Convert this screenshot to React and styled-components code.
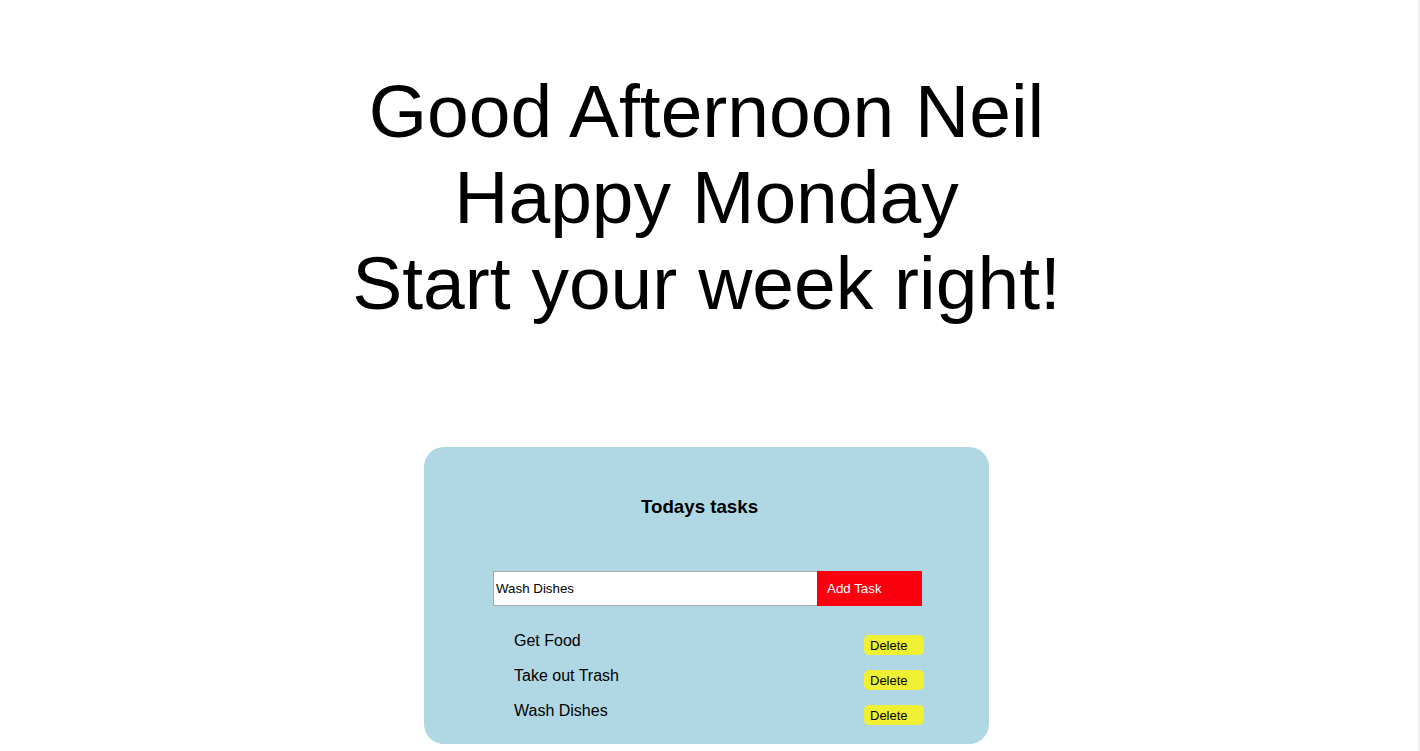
import React, { useState } from "react";
import styled, { createGlobalStyle } from "styled-components";

const GlobalStyle = createGlobalStyle`
  body {
    margin: 0;
    background: #ffffff;
    font-family: "Liberation Sans", Arial, sans-serif;
    color: #000;
  }
`;

const Page = styled.div`
  min-height: 751px;
  padding-right: 5px;
  border-right: 2px solid #f0f0f0;
  box-sizing: border-box;
  overflow: hidden;
`;

const Greeting = styled.h1`
  margin: 68px 0 0;
  text-align: center;
  font-size: 75px;
  font-weight: 400;
  line-height: 86px;
`;

const Card = styled.section`
  width: 565px;
  height: 297px;
  margin: 121px auto 0;
  box-sizing: border-box;
  padding-top: 49px;
  background: #b0d8e4;
  border-radius: 20px;
`;

const Title = styled.h3`
  margin: 0;
  padding-right: 14px;
  text-align: center;
  font-size: 18.72px;
  font-weight: 700;
  line-height: 22px;
`;

const Form = styled.form`
  display: flex;
  margin: 53px 67px 0 69px;
  height: 35px;
`;

const Input = styled.input`
  flex: 1;
  box-sizing: border-box;
  height: 35px;
  margin: 0;
  padding: 0 2px;
  border: 1px solid #a9a9a9;
  border-right: none;
  background: #fff;
  font-family: "Liberation Sans", Arial, sans-serif;
  font-size: 13.33px;
  color: #000;
  outline: none;
`;

const AddButton = styled.button`
  width: 105px;
  height: 35px;
  margin: 0;
  padding: 0 0 0 10px;
  border: none;
  background: #fa000f;
  color: #fff;
  text-align: left;
  font-family: "Liberation Sans", Arial, sans-serif;
  font-size: 13.33px;
  cursor: pointer;
`;

const List = styled.ul`
  list-style: none;
  margin: 26px 0 0;
  padding: 0 65px 0 90px;
`;

const Task = styled.li`
  display: flex;
  justify-content: space-between;
  align-items: flex-start;
  height: 35px;
  font-size: 16px;
  line-height: 18px;
`;

const DeleteButton = styled.button`
  width: 60px;
  height: 20px;
  margin-top: 3px;
  padding: 0 0 0 6px;
  border: none;
  border-radius: 5px;
  background: #f0f032;
  color: #000;
  text-align: left;
  font-family: "Liberation Sans", Arial, sans-serif;
  font-size: 13px;
  cursor: pointer;
`;

function App() {
  const [tasks, setTasks] = useState(["Get Food", "Take out Trash", "Wash Dishes"]);
  const [value, setValue] = useState("Wash Dishes");

  const addTask = (e) => {
    e.preventDefault();
    if (value.trim()) setTasks([...tasks, value]);
  };

  return (
    <Page>
      <GlobalStyle />
      <Greeting>
        Good Afternoon Neil
        <br />
        Happy Monday
        <br />
        Start your week right!
      </Greeting>
      <Card>
        <Title>Todays tasks</Title>
        <Form onSubmit={addTask}>
          <Input value={value} onChange={(e) => setValue(e.target.value)} />
          <AddButton type="submit">Add Task</AddButton>
        </Form>
        <List>
          {tasks.map((t, i) => (
            <Task key={t + i}>
              <span>{t}</span>
              <DeleteButton onClick={() => setTasks(tasks.filter((_, j) => j !== i))}>
                Delete
              </DeleteButton>
            </Task>
          ))}
        </List>
      </Card>
    </Page>
  );
}

export default App;
